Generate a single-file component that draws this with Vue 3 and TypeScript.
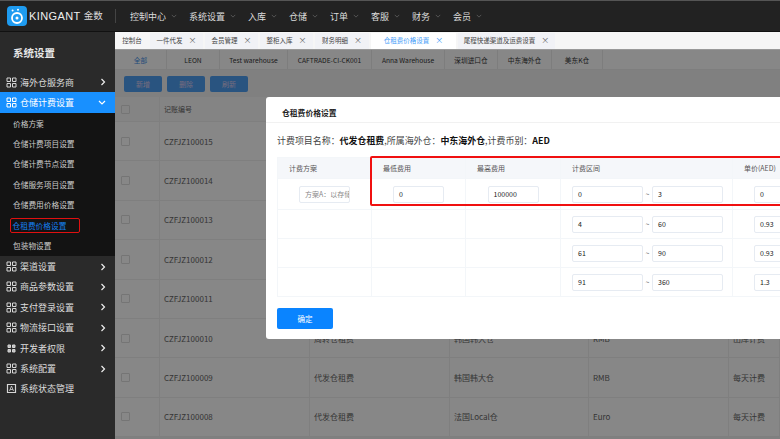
<template>
  <div class="page">
    <header class="topbar">
      <div class="brand">
        <svg class="logo" viewBox="0 0 20 20" width="20" height="20">
          <rect width="20" height="20" rx="4" fill="#1e9bf0" />
          <circle cx="10" cy="12" r="5" fill="none" stroke="#fff" stroke-width="1.8" />
          <circle cx="10" cy="12" r="1.5" fill="#fff" />
          <circle cx="5.6" cy="4.4" r="1" fill="#fff" />
          <circle cx="11" cy="3.8" r="1" fill="#fff" />
        </svg>
        <span class="brand-en">KINGANT</span>
        <span class="brand-cn">金数</span>
      </div>
      <nav class="topnav">
        <a v-for="item in topMenu" :key="item" class="topnav-item">
          {{ item }}
          <svg viewBox="0 0 8 5" width="6" height="4"><path d="M1 1l3 3 3-3" fill="none" stroke="#666" stroke-width="1" /></svg>
        </a>
      </nav>
    </header>

    <div class="body">
      <aside class="sidebar">
        <div class="side-title">系统设置</div>
        <div class="side-item">
          <svg class="grid-icon" viewBox="0 0 11 11" width="11" height="11"><path :d="gridPath" fill="none" stroke="#d6d6d6" stroke-width="1" /></svg>
          <span class="side-label">海外仓服务商</span>
          <svg class="chev" viewBox="0 0 6 8" width="6" height="8"><path d="M1.5 1l3 3-3 3" fill="none" stroke="#eee" stroke-width="1.2" /></svg>
        </div>
        <div class="side-item active">
          <svg class="grid-icon" viewBox="0 0 11 11" width="11" height="11"><path :d="gridPath" fill="none" stroke="#fff" stroke-width="1" /></svg>
          <span class="side-label">仓储计费设置</span>
          <svg class="chev-down" viewBox="0 0 8 6" width="8" height="6"><path d="M1 1l3 3 3-3" fill="none" stroke="#fff" stroke-width="1.2" /></svg>
        </div>
        <div class="submenu">
          <div v-for="sub in subMenu" :key="sub" class="sub-item" :class="{ current: sub === currentSub }">
            <span>{{ sub }}</span>
          </div>
        </div>
        <div v-for="item in sideMenu" :key="item.label" class="side-item">
          <svg class="grid-icon" viewBox="0 0 11 11" width="11" height="11">
            <path :d="item.small ? smallGridPath : gridPath" :fill="item.small ? '#bbb' : 'none'" stroke="#d6d6d6" stroke-width="1" />
          </svg>
          <span class="side-label">{{ item.label }}</span>
          <svg class="chev" viewBox="0 0 6 8" width="6" height="8"><path d="M1.5 1l3 3-3 3" fill="none" stroke="#eee" stroke-width="1.2" /></svg>
        </div>
        <div class="side-item">
          <svg class="grid-icon" viewBox="0 0 11 11" width="11" height="11">
            <path d="M1.5 1.5h8v8h-8z" fill="none" stroke="#d6d6d6" stroke-width="1.2" />
            <path d="M3.5 8l2-5 2 5M4.2 6.5h2.6" fill="none" stroke="#d6d6d6" stroke-width=".8" />
          </svg>
          <span class="side-label">系统状态管理</span>
        </div>
      </aside>

      <main class="main">
        <div class="tabs">
          <div v-for="tab in tabs" :key="tab.label" class="tab" :class="{ on: tab.on, plain: !tab.close }" :style="{ width: tab.width + 'px' }">
            <span>{{ tab.label }}</span>
            <span v-if="tab.close" class="tab-x">×</span>
          </div>
        </div>

        <div class="content">
          <div class="filters">
            <div v-for="(f, i) in warehouses" :key="f.label" class="filter" :class="{ sel: i === 0 }" :style="{ width: f.width + 'px' }">{{ f.label }}</div>
          </div>
          <div class="toolbar">
            <button class="tool-btn">新增</button>
            <button class="tool-btn">删除</button>
            <button class="tool-btn">刷新</button>
          </div>
          <div class="list">
            <div class="list-row list-head">
              <div class="cell check"><i class="box"></i></div>
              <div class="cell">记账编号</div>
              <div class="cell"></div>
              <div class="cell"></div>
              <div class="cell"></div>
              <div class="cell"></div>
            </div>
            <div v-for="row in records" :key="row.no" class="list-row">
              <div class="cell check"><i class="box"></i></div>
              <div class="cell">{{ row.no }}</div>
              <div class="cell">{{ row.name }}</div>
              <div class="cell">{{ row.wh }}</div>
              <div class="cell">{{ row.cur }}</div>
              <div class="cell">{{ row.mode }}</div>
            </div>
          </div>

          <div class="mask"></div>

          <section class="modal">
            <div class="modal-title">仓租费价格设置</div>
            <div class="modal-body">
              <p class="info">
                <span>计费项目名称：</span><b>代发仓租费</b><span>,所属海外仓：</span><b>中东海外仓</b><span>,计费币别：</span><b>AED</b>
              </p>
              <div class="price-wrap">
                <table class="price">
                  <colgroup>
                    <col style="width: 94px" />
                    <col style="width: 94px" />
                    <col style="width: 95px" />
                    <col style="width: 172px" />
                    <col style="width: 100px" />
                  </colgroup>
                  <thead>
                    <tr>
                      <th>计费方案</th>
                      <th>最低费用</th>
                      <th>最高费用</th>
                      <th>计费区间</th>
                      <th>单价(AED)</th>
                    </tr>
                  </thead>
                  <tbody>
                    <tr v-for="(p, i) in prices" :key="p.from" :style="{ height: p.height + 'px' }">
                      <td class="center"><div v-if="i === 0" class="field plan">方案A：以存储</div></td>
                      <td class="center"><div v-if="i === 0" class="field fee">0</div></td>
                      <td class="center"><div v-if="i === 0" class="field fee">100000</div></td>
                      <td>
                        <div class="range">
                          <div class="field wide">{{ p.from }}</div>
                          <span class="tilde">~</span>
                          <div class="field wide">{{ p.to }}</div>
                        </div>
                      </td>
                      <td><div class="field unit">{{ p.unit }}</div></td>
                    </tr>
                  </tbody>
                </table>
                <div class="red-frame"></div>
              </div>
              <button class="ok">确定</button>
            </div>
          </section>
        </div>
      </main>
    </div>
  </div>
</template>

<script setup lang="ts">
const gridPath =
  'M1 1h3.5v3.5H1zM6.5 1H10v3.5H6.5zM1 6.5h3.5V10H1zM6.5 6.5H10V10H6.5z';
const smallGridPath =
  'M2 2h2.5v2.5H2zM6.5 2H9v2.5H6.5zM2 6.5h2.5V9H2zM6.5 6.5H9V9H6.5z';

const topMenu = ['控制中心', '系统设置', '入库', '仓储', '订单', '客服', '财务', '会员'];
const currentSub = '仓租费价格设置';
const subMenu = [
  '价格方案',
  '仓储计费项目设置',
  '仓储计费节点设置',
  '仓储服务项目设置',
  '仓储费用价格设置',
  '仓租费价格设置',
  '包装物设置',
];
const sideMenu = [
  { label: '渠道设置', small: false },
  { label: '商品参数设置', small: false },
  { label: '支付登录设置', small: false },
  { label: '物流接口设置', small: false },
  { label: '开发者权限', small: true },
  { label: '系统配置', small: false },
];
const tabs = [
  { label: '控制台', width: 32, close: false, on: false },
  { label: '一件代发', width: 53, close: true, on: false },
  { label: '会员管理', width: 53, close: true, on: false },
  { label: '整柜入库', width: 53, close: true, on: false },
  { label: '财务明细', width: 54, close: true, on: false },
  { label: '仓租费价格设置', width: 85, close: true, on: true },
  { label: '尾程快递渠道及运费设置', width: 97, close: true, on: false },
];
const warehouses = [
  { label: '全部', width: 52 },
  { label: 'LEON', width: 53 },
  { label: 'Test warehouse', width: 68 },
  { label: 'CAFTRADE-CI-CK001', width: 84 },
  { label: 'Anna Warehouse', width: 73 },
  { label: '深圳进口仓', width: 53 },
  { label: '中东海外仓', width: 54 },
  { label: '美东K仓', width: 51 },
];
const records = [
  { no: 'CZFJZ100015', name: '代发仓租费', wh: '中东海外仓', cur: 'AED', mode: '每天计费' },
  { no: 'CZFJZ100014', name: '代发仓租费', wh: '美东K仓', cur: 'USD', mode: '每天计费' },
  { no: 'CZFJZ100013', name: '代发仓租费', wh: '深圳进口仓', cur: 'RMB', mode: '每天计费' },
  { no: 'CZFJZ100012', name: '代发仓租费', wh: '韩国韩大仓', cur: 'RMB', mode: '每天计费' },
  { no: 'CZFJZ100011', name: '代发仓租费', wh: '韩国韩大仓', cur: 'RMB', mode: '每天计费' },
  { no: 'CZFJZ100010', name: '周转仓租费', wh: '韩国韩大仓', cur: 'RMB', mode: '出库计费' },
  { no: 'CZFJZ100009', name: '代发仓租费', wh: '韩国韩大仓', cur: 'RMB', mode: '每天计费' },
  { no: 'CZFJZ100008', name: '代发仓租费', wh: '法国Local仓', cur: 'Euro', mode: '每天计费' },
];
const prices = [
  { from: '0', to: '3', unit: '0', height: 31 },
  { from: '4', to: '60', unit: '0.93', height: 29 },
  { from: '61', to: '90', unit: '0.93', height: 29 },
  { from: '91', to: '360', unit: '1.3', height: 29 },
];
</script>

<style>
html,
body {
  margin: 0;
  overflow: hidden;
  background: #fff;
}
</style>

<style scoped>
.page {
  width: 780px;
  height: 439px;
  display: flex;
  flex-direction: column;
  overflow: hidden;
  font-family: "Noto Sans CJK SC", "Liberation Sans", sans-serif;
  color: #333;
}

.topbar {
  height: 32px;
  box-sizing: border-box;
  flex: none;
  display: flex;
  align-items: center;
  background: #222;
  border-top: 1px solid #555;
  border-bottom: 1px solid #111;
}

.brand {
  width: 116px;
  box-sizing: border-box;
  padding-left: 7px;
  display: flex;
  align-items: center;
  border-right: 1px solid #444;
  height: 14px;
}

.logo {
  flex: none;
}

.brand-en {
  margin-left: 2px;
  font-family: "Liberation Sans", sans-serif;
  font-size: 11px;
  letter-spacing: 0.4px;
  color: #eee;
}

.brand-cn {
  margin-left: 3px;
  font-size: 9.5px;
  line-height: 1;
  color: #ddd;
}

.topnav {
  display: flex;
  padding-left: 14px;
}

.topnav-item {
  display: flex;
  align-items: center;
  gap: 5px;
  margin-right: 12px;
  font-size: 9px;
  color: #ddd;
  white-space: nowrap;
}

.body {
  flex: 1;
  display: flex;
  min-height: 0;
}

.sidebar {
  width: 115px;
  flex: none;
  background: #2a2a2a;
}

.side-title {
  height: 40px;
  box-sizing: border-box;
  padding: 12px 0 0 13px;
  font-size: 10.5px;
  line-height: 18px;
  font-weight: 700;
  color: #e6e6e6;
}

.side-item {
  height: 20.4px;
  display: flex;
  align-items: center;
  padding-left: 6px;
  font-size: 9px;
  color: #ddd;
}

.side-item.active {
  height: 21px;
  background: #1890ff;
  color: #fff;
}

.side-label {
  margin-left: 3px;
  flex: 1;
  white-space: nowrap;
}

.chev {
  margin-right: 9px;
}

.chev-down {
  margin-right: 9px;
}

.submenu {
  background: #131313;
  padding: 0 0 0 13px;
  height: 143px;
}

.sub-item {
  height: 20.4px;
  display: flex;
  align-items: center;
  padding-bottom: 1px;
  box-sizing: border-box;
  font-size: 7.7px;
  color: #ccc;
}

.sub-item.current {
  color: #1580f0;
}

.sub-item.current span {
  margin-left: -3.5px;
  padding: 1px 13px 1px 2px;
  border: 1.5px solid #e01010;
  border-radius: 2px;
  line-height: 11px;
}

.main {
  flex: 1;
  min-width: 0;
  display: flex;
  flex-direction: column;
}

.tabs {
  height: 18px;
  flex: none;
  display: flex;
  gap: 2px;
  padding-left: 1px;
  padding-top: 1px;
  background: #f6f6f6;
  border-bottom: 1px solid #999;
  box-sizing: border-box;
  font-size: 6.5px;
  color: #444;
}

.tab {
  flex: none;
  display: flex;
  align-items: center;
  justify-content: center;
  gap: 6px;
  box-sizing: border-box;
  padding-bottom: 2px;
  background: #f1f2f6;
  white-space: nowrap;
}

.tab.plain {
  background: #f6f6f6;
}

.tab.on {
  background: #fff;
  color: #3f9cf8;
}

.tab-x {
  font-size: 8px;
  line-height: 1;
  color: #666;
}

.tab.on .tab-x {
  color: #3f9cf8;
}

.content {
  flex: 1;
  position: relative;
  overflow: hidden;
  background: #f2f2f2;
}

.filters {
  height: 20px;
  display: flex;
  background: #fff;
  border-bottom: 1px solid #eee;
  box-sizing: border-box;
  font-size: 6.7px;
  color: #333;
}

.filter {
  flex: none;
  display: flex;
  align-items: center;
  justify-content: center;
  border-right: 1px solid #ececec;
  box-sizing: border-box;
  white-space: nowrap;
}

.filter.sel {
  color: #3f8fe8;
}

.toolbar {
  height: 27px;
  display: flex;
  align-items: center;
  gap: 5px;
  padding-left: 9px;
  box-sizing: border-box;
}

.tool-btn {
  width: 38px;
  height: 16px;
  padding: 0;
  border: none;
  border-radius: 2px;
  background: #4f9ff2;
  color: #dce;
  font-family: inherit;
  font-size: 7px;
}

.list {
  background: #fff;
  font-size: 8px;
  color: #666;
}

.list-row {
  height: 39.4px;
  display: grid;
  grid-template-columns: 45px 150px 140px 139px 140px 1fr;
  box-sizing: border-box;
  border-bottom: 1px solid #f0f0f0;
}

.list-head {
  height: 25px;
  background: #fafafa;
  font-size: 7px;
}

.cell {
  display: flex;
  align-items: center;
  padding-left: 4px;
  border-right: 1px solid #f0f0f0;
  white-space: nowrap;
}

.check {
  padding-left: 6px;
}

.box {
  width: 7px;
  height: 7px;
  border: 1px solid #ddd;
  border-radius: 1px;
}

.mask {
  position: absolute;
  inset: 0;
  background: rgba(0, 0, 0, 0.47);
}

.modal {
  position: absolute;
  left: 151px;
  top: 47px;
  width: 700px;
  height: 242px;
  background: #fff;
  border-radius: 3px;
}

.modal-title {
  height: 26px;
  box-sizing: border-box;
  padding: 10px 0 0 16px;
  border-bottom: 1px solid #f1f1f1;
  font-size: 7.8px;
  line-height: 12px;
  font-weight: 700;
  color: #222;
}

.modal-body {
  padding: 11px 0 0 11px;
}

.info {
  margin: 0;
  font-size: 8.95px;
  line-height: 14px;
  color: #444;
  white-space: nowrap;
}

.info b {
  color: #111;
}

.price-wrap {
  position: relative;
  margin-top: 9px;
  width: 555px;
}

.price {
  border-collapse: collapse;
  table-layout: fixed;
  width: 555px;
  font-size: 7px;
}

.price th {
  height: 20px;
  padding: 0 0 0 11px;
  background: #f5f7fa;
  border: 1px solid #f3f6f9;
  font-weight: 400;
  color: #555;
  text-align: left;
}

.price td {
  padding: 0 0 0 11px;
  border: 1px solid #f3f6f9;
  vertical-align: middle;
}

.price td.center {
  padding: 0;
}

.field {
  height: 17px;
  box-sizing: border-box;
  padding-left: 5px;
  display: flex;
  align-items: center;
  background: #fff;
  border: 1px solid #e6ebf2;
  border-radius: 2px;
  font-size: 7px;
  color: #222;
  white-space: nowrap;
  overflow: hidden;
}

.plan {
  width: 51px;
  margin: 0 auto;
  color: #888;
}

.fee {
  width: 51px;
  margin: 0 auto;
}

.range {
  display: flex;
  align-items: center;
}

.wide {
  width: 71px;
  flex: none;
}

.tilde {
  width: 9px;
  text-align: center;
  color: #666;
}

.unit {
  width: 60px;
  margin-left: 10px;
}

.red-frame {
  position: absolute;
  left: 93px;
  top: -1px;
  width: 500px;
  height: 50px;
  box-sizing: border-box;
  border: 2px solid #f01010;
  border-radius: 2px;
  pointer-events: none;
}

.ok {
  display: block;
  margin-top: 11px;
  width: 56px;
  height: 21px;
  padding: 0;
  border: none;
  border-radius: 2px;
  background: #0a84ff;
  color: #fff;
  font-family: inherit;
  font-size: 7.5px;
}
</style>
